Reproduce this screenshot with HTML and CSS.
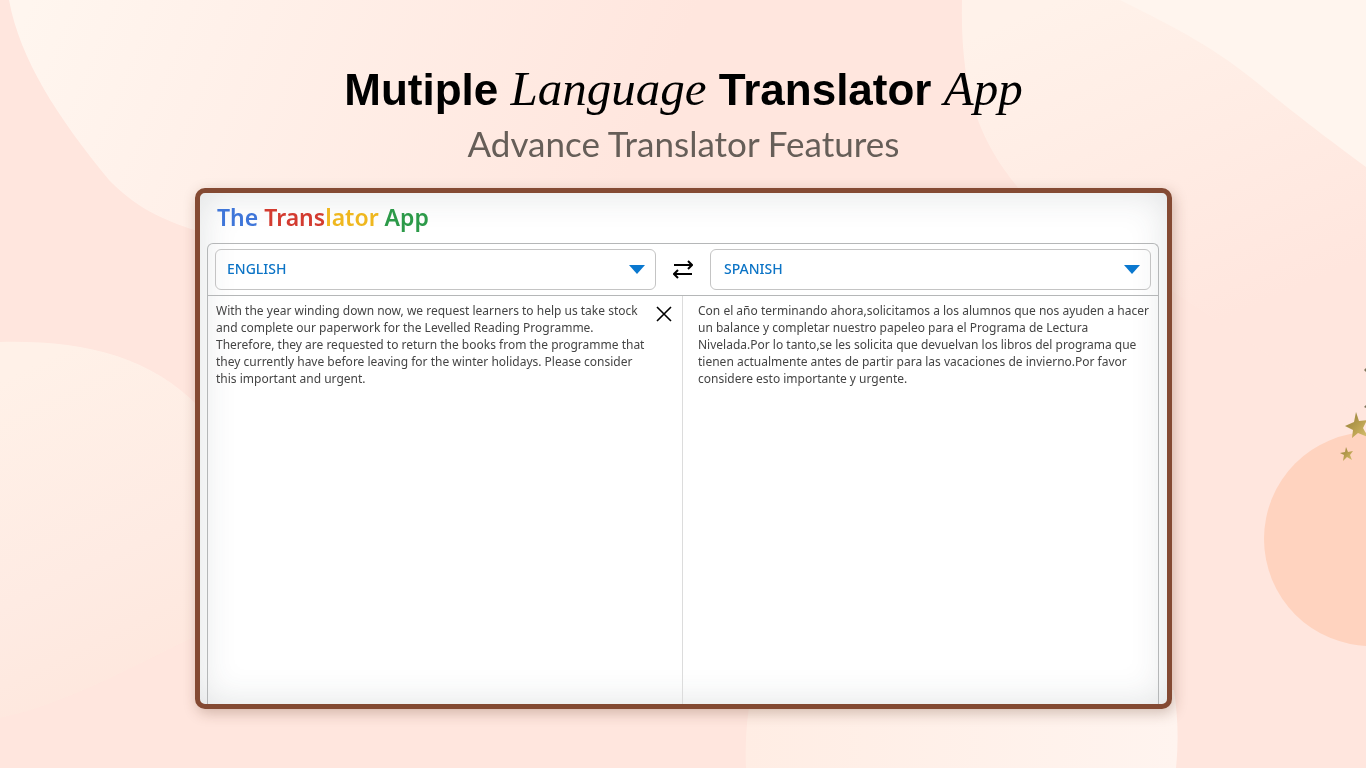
FILE: index.html
```
<!DOCTYPE html>
<html lang="en">
<head>
    <meta charset="UTF-8">
    <meta name="viewport" content="width=device-width, initial-scale=1.0">
    <title>Mutiple Language Translator App</title>
    <link rel="stylesheet" href="styles.css">
</head>
<body>
    <svg class="backdrop" viewBox="0 0 1366 768" preserveAspectRatio="xMidYMid slice" aria-hidden="true">
        <defs>
            <linearGradient id="fadeLeft" gradientUnits="userSpaceOnUse" x1="30" y1="0" x2="600" y2="240">
                <stop offset="0" stop-color="#fff6ef"/>
                <stop offset="0.3" stop-color="#fff1ea"/>
                <stop offset="1" stop-color="#ffe6de"/>
            </linearGradient>
            <linearGradient id="fadeRight" gradientUnits="userSpaceOnUse" x1="1060" y1="0" x2="1200" y2="330">
                <stop offset="0" stop-color="#fff2ea"/>
                <stop offset="1" stop-color="#ffe6de"/>
            </linearGradient>
            <linearGradient id="fadeLow" gradientUnits="userSpaceOnUse" x1="0" y1="380" x2="150" y2="690">
                <stop offset="0" stop-color="#fff1e8"/>
                <stop offset="0.6" stop-color="#feebe3"/>
                <stop offset="1" stop-color="#fee7dd"/>
            </linearGradient>
            <linearGradient id="fadeBottom" x1="0" y1="0" x2="1" y2="0">
                <stop offset="0" stop-color="#ffede4"/>
                <stop offset="1" stop-color="#fff4ef"/>
            </linearGradient>
            <linearGradient id="gold" x1="0" y1="0" x2="1" y2="1">
                <stop offset="0" stop-color="#8f7b36"/>
                <stop offset="0.6" stop-color="#bda352"/>
                <stop offset="1" stop-color="#d6c273"/>
            </linearGradient>
        </defs>
        <path fill="url(#fadeLeft)" d="M9 0C20 60 58 118 109 180C140 212 170 222 200 232L700 300V0Z"/>
        <path fill="url(#fadeRight)" d="M962 0C960 90 978 140 1020 190L1366 420V0Z"/>
        <path fill="#fff5ee" d="M1120 0C1180 30 1215 48 1260 85S1330 140 1366 167V0Z"/>
        <path fill="url(#fadeLow)" d="M0 342C80 340 150 355 200 408V634C145 660 70 703 0 718Z"/>
        <path fill="url(#fadeBottom)" d="M752 690Q744 730 746 768H1176Q1180 730 1174 690Z"/>
        <circle fill="#ffd3bf" cx="1371" cy="539" r="107"/>
        <path fill="url(#gold)" d="M1356 412L1359 421L1367 420L1363 428L1368 437L1358 433L1352 438L1353 430L1345 426L1354 422Z"/>
        <path fill="url(#gold)" d="M1346 447L1348 452L1353 451L1350 455L1352 460L1347 457L1343 461L1344 455L1340 453L1345 452Z"/>
        <path fill="#7d7358" d="M1366 368L1364 370L1366 372ZM1366 405L1364 407L1366 408Z"/>
    </svg>

    <main class="page">
        <header class="heading">
            <h1>Mutiple <em>Language</em> Translator <em>App</em></h1>
            <p class="subtitle">Advance Translator Features</p>
        </header>

        <section class="window">
            <h2 class="brand">
                <span class="blue">The</span>
                <span class="red">Trans</span><span class="yellow">lator</span>
                <span class="green">App</span>
            </h2>

            <div class="panel">
                <div class="languages">
                    <div class="select-box">
                        <select aria-label="Translate from">
                            <option>ENGLISH</option>
                            <option>SPANISH</option>
                        </select>
                    </div>
                    <button class="swap" type="button" aria-label="Swap languages">
                        <svg width="20" height="20" viewBox="0 0 20 20" fill="none" stroke="#000" stroke-width="2">
                            <path d="M1 5H19M15 1L19 5L15 9M19 14H1M5 10L1 14L5 18"/>
                        </svg>
                    </button>
                    <div class="select-box target">
                        <select aria-label="Translate to">
                            <option>SPANISH</option>
                            <option>ENGLISH</option>
                        </select>
                    </div>
                </div>

                <div class="texts">
                    <div class="source">
                        <textarea aria-label="Text to translate" spellcheck="false">With the year winding down now, we request learners to help us take stock and complete our paperwork for the Levelled Reading Programme. Therefore, they are requested to return the books from the programme that they currently have before leaving for the winter holidays. Please consider this important and urgent.</textarea>
                        <button class="clear" type="button" aria-label="Clear text">
                            <svg width="16" height="16" viewBox="0 0 16 16" fill="none" stroke="#000" stroke-width="1.6">
                                <path d="M1 1L15 15M15 1L1 15"/>
                            </svg>
                        </button>
                    </div>
                    <p class="result" lang="es">Con el año terminando ahora,solicitamos a los alumnos que nos ayuden a hacer un balance y completar nuestro papeleo para el Programa de Lectura Nivelada.Por lo tanto,se les solicita que devuelvan los libros del programa que tienen actualmente antes de partir para las vacaciones de invierno.Por favor considere esto importante y urgente.</p>
                </div>
            </div>
        </section>
    </main>
</body>
</html>
```
FILE: styles.css
```
* {
    box-sizing: border-box;
}

body {
    margin: 0;
    background-color: #ffe6de;
    font-family: "Noto Sans", "Open Sans", sans-serif;
}

/* Decorative shapes behind the page */
.backdrop {
    position: fixed;
    inset: 0;
    z-index: -1;
    width: 100%;
    height: 100%;
}

.page {
    display: flex;
    flex-direction: column;
    min-height: 100vh;
    padding: 60px 194px 59px 195px;
}

.heading {
    height: 128px;
    text-align: center;
}

.heading h1 {
    margin: 0;
    color: #000;
    font-family: "Liberation Sans", Arial, sans-serif;
    font-size: 44px;
    font-weight: 700;
    line-height: 60px;
}

.heading em {
    font-family: "Liberation Serif", "Times New Roman", serif;
    font-size: 49px;
    font-weight: 400;
    line-height: 48px;
}

.subtitle {
    margin: 0;
    color: #665e58;
    font-family: Lato, sans-serif;
    font-size: 35px;
    line-height: 46px;
}

/* App window */
.window {
    display: flex;
    flex: 1;
    flex-direction: column;
    padding: 0 8px 0 7px;
    border: 5px solid #844a33;
    border-radius: 10px;
    background-color: #fff;
    box-shadow: 2px 4px 14px rgba(90, 50, 30, 0.28), inset 0 0 36px rgba(50, 60, 70, 0.15);
}

.brand {
    height: 50px;
    margin: 0;
    padding-left: 10px;
    font-size: 23px;
    font-weight: 600;
    line-height: 48px;
}

.blue {
    color: #3f76d9;
}

.red {
    color: #d33b30;
}

.yellow {
    color: #efb71f;
}

.green {
    color: #2c9a49;
}

.panel {
    display: flex;
    flex: 1;
    flex-direction: column;
    border: 1px solid #b5b7b8;
    border-bottom: none;
    border-radius: 6px 6px 0 0;
}

.languages {
    display: grid;
    grid-template-columns: 1fr 54px 1fr;
    padding: 5px 7px;
    border-bottom: 1px solid #b5b7b8;
}

.select-box {
    position: relative;
}

.select-box::after {
    content: "";
    position: absolute;
    top: 16px;
    right: 11px;
    border: 8px solid transparent;
    border-top: 9px solid #0a78cf;
    border-bottom: none;
    pointer-events: none;
}

.select-box select {
    width: 100%;
    height: 41px;
    padding: 0 11px 2px;
    appearance: none;
    border: 1px solid #c4c4c4;
    border-radius: 6px;
    background-color: transparent;
    color: #0c74c6;
    font-family: inherit;
    font-size: 14px;
    font-weight: 500;
}

.target select {
    padding-left: 13px;
}

.swap,
.clear {
    display: flex;
    align-items: center;
    justify-content: center;
    padding: 0;
    border: none;
    background: none;
    cursor: pointer;
}

.texts {
    display: grid;
    flex: 1;
    grid-template-columns: 1fr 1fr;
}

.source {
    display: flex;
    gap: 6px;
    align-items: flex-start;
    padding: 6px 10px 0 8px;
    border-right: 1px solid #dcdcdc;
}

.source textarea {
    flex: 1;
    height: 100%;
    padding: 0;
    border: none;
    outline: none;
    resize: none;
    background: none;
    color: #444;
    font-family: inherit;
    font-size: 12px;
    line-height: 17px;
}

.clear {
    margin-top: 4px;
}

.result {
    margin: 0;
    padding: 6px 4px 0 15px;
    color: #444;
    font-size: 12px;
    line-height: 17px;
}
```
